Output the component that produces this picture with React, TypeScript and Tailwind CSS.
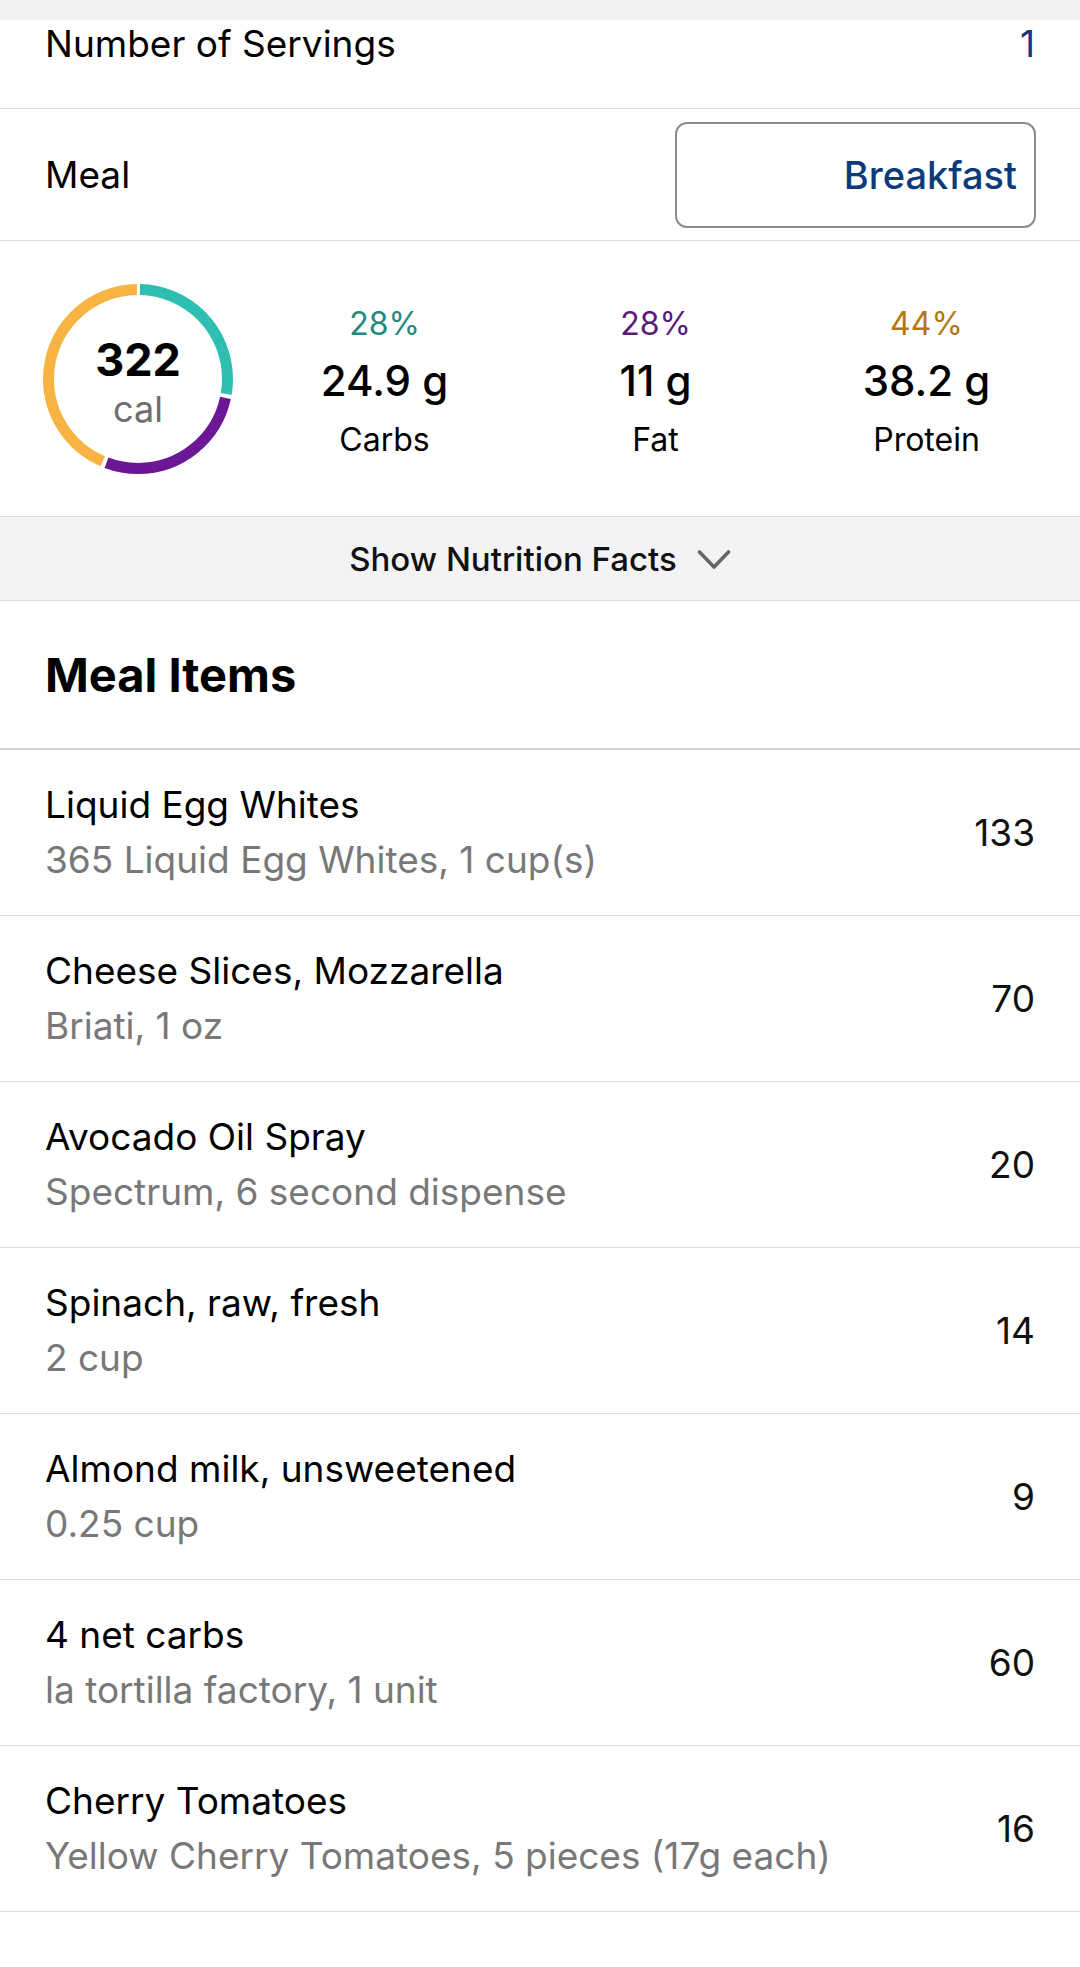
const items = [
  { name: "Liquid Egg Whites", detail: "365 Liquid Egg Whites, 1 cup(s)", cal: 133 },
  { name: "Cheese Slices, Mozzarella", detail: "Briati, 1 oz", cal: 70 },
  { name: "Avocado Oil Spray", detail: "Spectrum, 6 second dispense", cal: 20 },
  { name: "Spinach, raw, fresh", detail: "2 cup", cal: 14 },
  { name: "Almond milk, unsweetened", detail: "0.25 cup", cal: 9 },
  { name: "4 net carbs", detail: "la tortilla factory, 1 unit", cal: 60 },
  { name: "Cherry Tomatoes", detail: "Yellow Cherry Tomatoes, 5 pieces (17g each)", cal: 16 },
];

const macros = [
  { pct: "28%", amount: "24.9 g", label: "Carbs", color: "text-[#23897f]" },
  { pct: "28%", amount: "11 g", label: "Fat", color: "text-[#5a1a7a]" },
  { pct: "44%", amount: "38.2 g", label: "Protein", color: "text-[#b4770f]" },
];

function CalorieRing() {
  const r = 89.5;
  const c = 2 * Math.PI * r;
  const gap = 4;
  const segs = [
    { from: 0, to: 0.28, color: "#2fbfb2" },
    { from: 0.28, to: 0.56, color: "#6c1796" },
    { from: 0.56, to: 1, color: "#f8b443" },
  ];
  return (
    <div className="relative w-[190px] h-[190px] shrink-0">
      <svg width="190" height="190" viewBox="0 0 190 190" className="-rotate-90">
        {segs.map(s => {
          const len = (s.to - s.from) * c - gap;
          return (
            <circle key={s.color} cx="95" cy="95" r={r} fill="none" stroke={s.color} strokeWidth="11"
              strokeDasharray={`${len} ${c - len}`} strokeDashoffset={-(s.from * c + gap / 2)} />
          );
        })}
      </svg>
      <div className="absolute inset-0 flex flex-col items-center justify-center pt-[8px]">
        <span className="text-[45px] leading-[48px] font-bold text-black">322</span>
        <span className="text-[36px] leading-[42px] text-[#6e6e6e] mt-[4px]">cal</span>
      </div>
    </div>
  );
}

export default function App() {
  return (
    <div className="w-[1080px] bg-white text-black" style={{ fontFamily: "Inter, 'Noto Sans', sans-serif" }}>
      <div className="h-[20px] bg-[#f2f2f5]" />

      <div className="h-[89px] flex items-start justify-between px-[45px] pt-[2px] border-b border-[#dedede]">
        <span className="text-[37px] leading-[44px]">Number of Servings</span>
        <span className="text-[37px] leading-[44px] text-[#0c3b7c]">1</span>
      </div>

      <div className="h-[132px] flex items-center justify-between pl-[45px] pr-[44px] border-b border-[#dedede]">
        <span className="text-[37px] leading-[44px]">Meal</span>
        <div className="w-[361px] h-[106px] border-2 border-[#8c8c8c] rounded-[12px] flex items-center justify-end pr-[17px]">
          <span className="text-[38px] leading-[44px] font-medium text-[#0c3b7c]">Breakfast</span>
        </div>
      </div>

      <div className="h-[276px] flex items-center pl-[43px] border-b border-[#dcdcdc]">
        <CalorieRing />
        <div className="flex ml-[16px] mt-[6px]">
          {macros.map(m => (
            <div key={m.label} className="w-[271px] flex flex-col items-center">
              <span className={`text-[32px] leading-[40px] ${m.color}`}>{m.pct}</span>
              <span className="text-[42px] leading-[50px] font-medium mt-[12px]">{m.amount}</span>
              <span className="text-[32px] leading-[40px] mt-[14px]">{m.label}</span>
            </div>
          ))}
        </div>
      </div>

      <div className="h-[84px] bg-[#f3f3f5] flex items-center justify-center gap-[20px] border-b border-[#dcdcdc]">
        <span className="text-[33px] leading-[42px] font-medium text-[#111]">Show Nutrition Facts</span>
        <svg width="34" height="22" viewBox="0 0 34 22" className="mt-[2px]">
          <polyline points="2.5,3 17,18 31.5,3" fill="none" stroke="#666" strokeWidth="3.6" strokeLinecap="round" strokeLinejoin="round" />
        </svg>
      </div>

      <div className="h-[149px] flex items-center px-[45px] border-b-2 border-[#d2d2d2]">
        <span className="text-[47px] leading-[54px] font-bold">Meal Items</span>
      </div>

      {items.map(it => (
        <div key={it.name} className="h-[166px] flex items-center justify-between px-[45px] border-b border-[#dedede]">
          <div className="flex flex-col">
            <span className="text-[37px] leading-[44px] text-black">{it.name}</span>
            <span className="text-[37px] leading-[44px] text-[#787878] mt-[11px]">{it.detail}</span>
          </div>
          <span className="text-[37px] leading-[44px] text-[#111]">{it.cal}</span>
        </div>
      ))}
      <div className="h-[54px]" />
    </div>
  );
}
